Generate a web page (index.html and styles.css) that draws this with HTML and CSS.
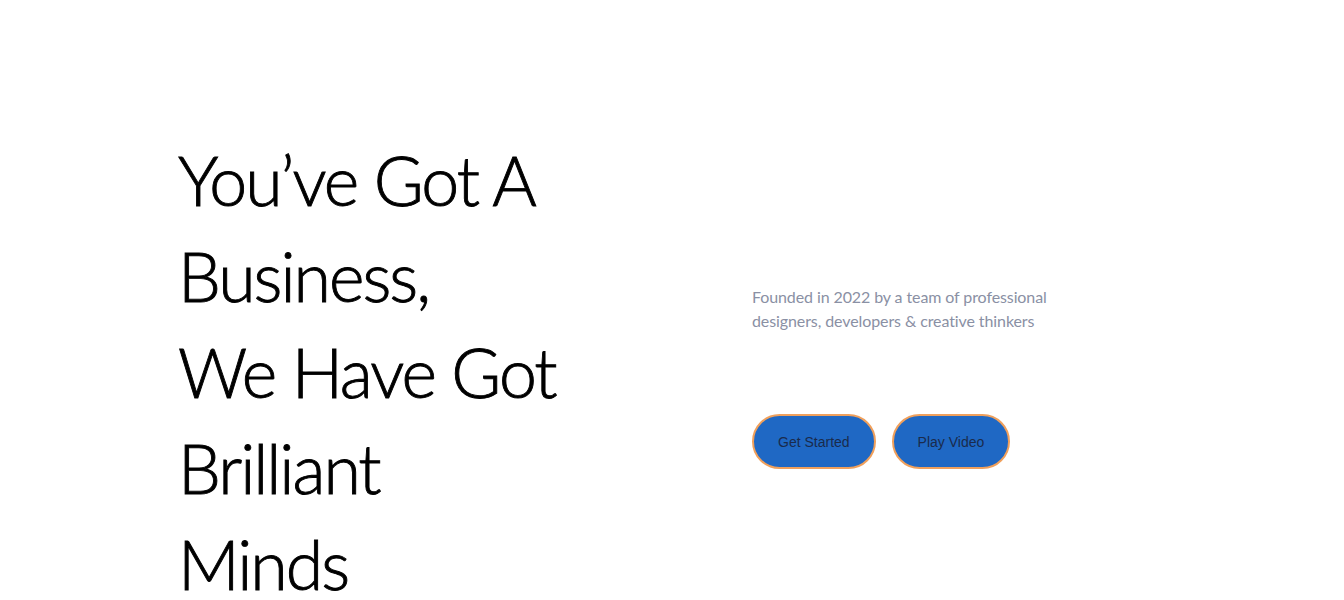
FILE: index.html
```html
<!DOCTYPE html>
<html lang="en">
<head>
<meta charset="utf-8">
<title>Hero</title>
<link rel="stylesheet" href="styles.css">
</head>
<body>
<section class="hero">
  <div class="hero-inner">
    <div class="hero-left">
      <h1 class="hero-title">
        <span class="line">You’ve Got A</span>
        <span class="line">Business,</span>
        <span class="line">We Have Got</span>
        <span class="line">Brilliant</span>
        <span class="line">Minds</span>
      </h1>
    </div>
    <div class="hero-right">
      <p class="hero-text">Founded in 2022 by a team of professional<br>designers, developers &amp; creative thinkers</p>
      <div class="hero-actions">
        <a class="btn" href="#">Get Started</a>
        <a class="btn" href="#">Play Video</a>
      </div>
    </div>
  </div>
</section>
</body>
</html>
```

FILE: styles.css
```css
* { box-sizing: border-box; }
html, body { margin: 0; padding: 0; background: #ffffff; }
body { font-family: "Lato", "Open Sans", sans-serif; }

.hero { padding-top: 132px; }

.hero-inner {
  display: flex;
  align-items: flex-start;
  padding-left: 178px;
}

.hero-left { width: 574px; flex: none; }

.hero-title {
  margin: 0;
  font-family: "Lato", sans-serif;
  font-weight: 300;
  font-size: 68px;
  line-height: 96px;
  color: #000000;
  letter-spacing: -2px;
  -webkit-text-stroke: 0.9px #000000;
}
.hero-title .line { display: block; white-space: nowrap; }

.hero-right {
  display: flex;
  flex-direction: column;
  align-items: flex-start;
  margin-top: 153px;
}

.hero-text {
  margin: 0;
  font-family: "Lato", sans-serif;
  font-size: 16px;
  line-height: 24px;
  color: #8a90a4;
  letter-spacing: -0.1px;
}

.hero-actions {
  display: flex;
  gap: 16px;
  margin-top: 81px;
}

.btn {
  display: inline-flex;
  align-items: center;
  justify-content: center;
  height: 55px;
  padding: 0 24px;
  border-radius: 28px;
  background: #1f68c4;
  border: 2px solid #f0a05c;
  color: #1a2b4c;
  font-family: "Liberation Sans", Arial, sans-serif;
  font-size: 14px;
  text-decoration: none;
}
```
